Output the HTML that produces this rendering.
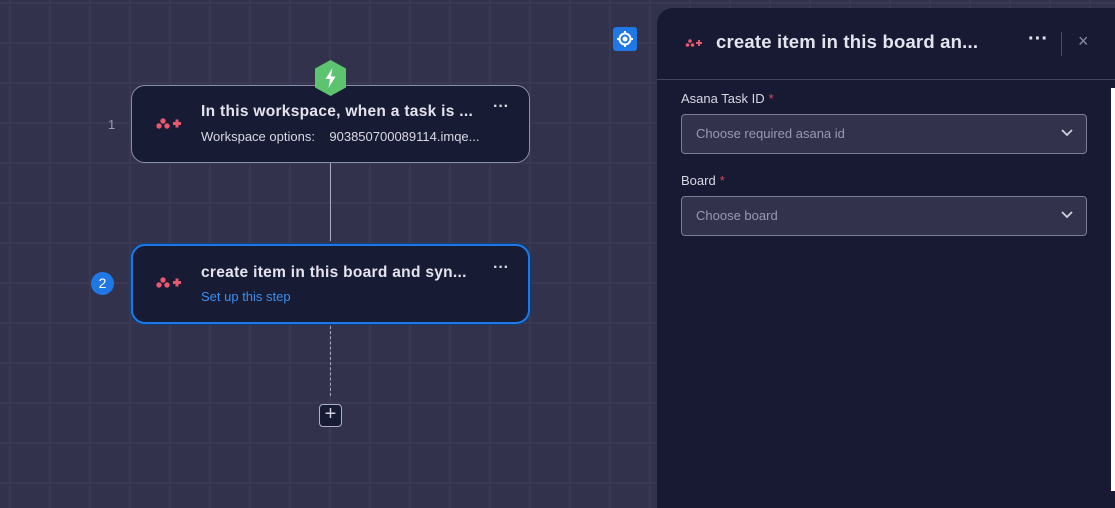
<!DOCTYPE html>
<html><head><style>
*{margin:0;padding:0;box-sizing:border-box}
body{width:1115px;height:491px;overflow:hidden;position:relative;font-family:"Liberation Sans",sans-serif;
background-color:#32324c;
background-image:linear-gradient(#393954 2px,transparent 2px),linear-gradient(90deg,#393954 2px,transparent 2px);
background-size:40px 40px;background-position:0 2px,9px 0;}
.card{position:absolute;left:131px;width:399px;background:#181b34;border-radius:14px;}
.c1{top:85px;height:78px;border:1px solid #8d8da6}
.c2{top:244px;height:80px;border:2px solid #1f78e6;box-shadow:0 0 0 1px #0d3e7a}
.title{position:absolute;left:69px;color:#e4e4ee;font-size:15.5px;font-weight:bold;letter-spacing:.3px}
.sub{position:absolute;left:69px;font-size:13px}
.dots{position:absolute;right:20px;color:#d8d8e4;font-size:16px;font-weight:bold;letter-spacing:0px}
.num{position:absolute;color:#9a9ab0;font-size:13px}
.panel{position:absolute;left:657px;top:8px;width:470px;height:500px;background:#181a34;border-radius:16px 0 0 0;}
.lbl{position:absolute;left:24px;color:#d8d8e4;font-size:13px}
.lbl b{color:#d54a5e;font-weight:normal;margin-left:4px}
.sel{position:absolute;left:24px;width:406px;height:40px;background:#32324c;border:1px solid #7c7c94;border-radius:4px;color:#9898b0;font-size:13px;padding:11px 14px}
.chev{position:absolute;right:12px;top:13px}
</style></head><body>
<div style="position:absolute;left:330px;top:163px;width:1px;height:78px;background:#a8a8bc"></div>
<div style="position:absolute;left:330px;top:326px;width:0;height:70px;border-left:1px dashed #a8a8bc"></div>
<div style="position:absolute;left:319px;top:404px;width:23px;height:23px;border:1px solid #b0b0c4;border-radius:4px;background:#181b34;color:#d0d0de;font-size:20px;line-height:19px;text-align:center">+</div>

<div class="num" style="left:108px;top:117px">1</div>
<div style="position:absolute;left:91px;top:272px;width:23px;height:23px;border-radius:50%;background:#1f78e6;color:#fff;font-size:14px;text-align:center;line-height:23px">2</div>

<div class="card c1">
<svg style="position:absolute;left:22px;top:28px" width="28" height="16"><g fill="#e8586e"><circle cx="9" cy="7" r="2.7"/><circle cx="5" cy="12" r="2.7"/><circle cx="13" cy="12" r="2.7"/><rect x="19" y="8" width="8" height="3"/><rect x="21.5" y="5.5" width="3" height="8"/></g></svg>
<div class="title" style="top:17px">In this workspace, when a task is ...</div>
<div class="sub" style="top:43px;color:#d8d8e4">Workspace options:&nbsp;&nbsp;&nbsp;&nbsp;903850700089114.imqe...</div>
<div class="dots" style="top:12px">···</div>
</div>
<svg style="position:absolute;left:313px;top:59px" width="35" height="38" viewBox="0 0 35 38"><polygon points="17.5,1 33,9.5 33,28.5 17.5,37 2,28.5 2,9.5" fill="#5cc46e"/><path d="M19.5 9 L12.5 20 H17 L15.5 29 L22.5 17.5 H18 Z" fill="#fff"/></svg>

<div class="card c2">
<svg style="position:absolute;left:21px;top:27px" width="28" height="16"><g fill="#e8586e"><circle cx="9" cy="7" r="2.7"/><circle cx="5" cy="12" r="2.7"/><circle cx="13" cy="12" r="2.7"/><rect x="19" y="8" width="8" height="3"/><rect x="21.5" y="5.5" width="3" height="8"/></g></svg>
<div class="title" style="top:18px;left:68px">create item in this board and syn...</div>
<div class="sub" style="top:43px;left:68px;color:#3a8ef0">Set up this step</div>
<div class="dots" style="top:13px;right:19px">···</div>
</div>

<div style="position:absolute;left:613px;top:27px;width:24px;height:24px;background:#1f78e6;border-radius:3px">
<svg width="24" height="24"><circle cx="12" cy="12" r="5.5" fill="none" stroke="#fff" stroke-width="2"/><circle cx="12" cy="12" r="2.5" fill="#fff"/><path d="M12 4v3M12 17v3M4 12h3M17 12h3" stroke="#fff" stroke-width="2"/></svg></div>

<div class="panel">
<svg style="position:absolute;left:27px;top:29px" width="20" height="12"><g fill="#e8586e"><circle cx="6" cy="4" r="1.8"/><circle cx="3.5" cy="8" r="1.8"/><circle cx="8.5" cy="8" r="1.8"/><rect x="12" y="5" width="6" height="2"/><rect x="14" y="3" width="2" height="6"/></g></svg>
<div style="position:absolute;left:59px;top:23px;color:#e4e4ee;font-size:18.5px;font-weight:bold;letter-spacing:.2px">create item in this board an...</div>
<div style="position:absolute;left:371px;top:20px;color:#e0e0ea;font-size:20px;font-weight:bold">···</div>
<div style="position:absolute;left:404px;top:24px;width:1px;height:24px;background:#4a4a66"></div>
<div style="position:absolute;left:421px;top:23px;color:#8c8ca4;font-size:18px">×</div>
<div style="position:absolute;left:0;top:71px;width:470px;height:1px;background:#44445e"></div>
<div class="lbl" style="top:83px">Asana Task ID<b>*</b></div>
<div class="sel" style="top:106px">Choose required asana id<svg class="chev" width="14" height="10"><path d="M2 2l5 5 5-5" stroke="#d0d0de" stroke-width="1.8" fill="none"/></svg></div>
<div class="lbl" style="top:165px">Board<b>*</b></div>
<div class="sel" style="top:188px">Choose board<svg class="chev" width="14" height="10"><path d="M2 2l5 5 5-5" stroke="#d0d0de" stroke-width="1.8" fill="none"/></svg></div>
</div>
<div style="position:absolute;left:1111px;top:88px;width:4px;height:403px;background:#fff"></div>
</body></html>
